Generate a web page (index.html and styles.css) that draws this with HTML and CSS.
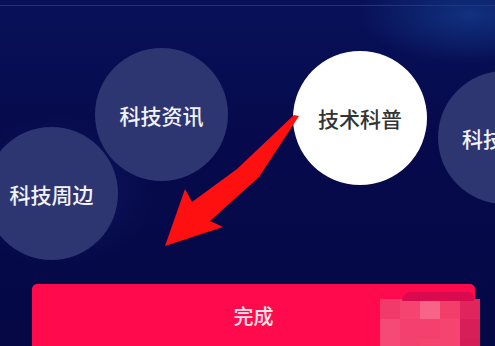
FILE: index.html
```html
<!DOCTYPE html>
<html lang="zh-CN">
<head>
    <meta charset="UTF-8">
    <title>选择兴趣</title>
    <link rel="stylesheet" href="styles.css">
</head>
<body>

<div class="screen">
    <div class="top-bar"></div>

    <div class="bubbles">
        <div class="bubble bubble-news">科技资讯</div>
        <div class="bubble bubble-gear">科技周边</div>
        <div class="bubble bubble-science selected">技术科普</div>
        <div class="bubble bubble-more">科技</div>

        <svg class="arrow" width="495" height="260" viewBox="0 0 495 260">
            <polygon fill="#ff1010"
                     points="299,117 294,116 237,170 192,203 185,190 165,247 223,228 210,222 259,178"/>
        </svg>
    </div>

    <div class="footer">
        <div class="done-button">完成</div>
    </div>

    <div class="mosaic">
        <div class="band"></div>
        <span style="background:#f23a6a"></span>
        <span style="background:#f5446f"></span>
        <span style="background:#f86488"></span>
        <span style="background:#f33d6b"></span>
        <span style="background:#e0245c"></span>
        <span style="background:#f54a75"></span>
        <span style="background:#f4406e"></span>
        <span style="background:#f3406d"></span>
        <span style="background:#f54470"></span>
        <span style="background:#d61e58"></span>
        <span style="background:#f64a74"></span>
        <span style="background:#f4426f"></span>
        <span style="background:#f5456f"></span>
        <span style="background:#f4446f"></span>
        <span style="background:#d41c56"></span>
    </div>
</div>

</body>
</html>
```

FILE: styles.css
```css
* {
    margin: 0;
    padding: 0;
    box-sizing: border-box;
}

body {
    width: 495px;
    height: 346px;
    overflow: hidden;
    font-family: "Noto Sans CJK SC", "Noto Sans", sans-serif;
}

.screen {
    position: relative;
    width: 495px;
    height: 346px;
    overflow: hidden;
    background:
        radial-gradient(ellipse 160px 70px at 470px 15px, rgba(20, 60, 140, .75), transparent 70%),
        radial-gradient(ellipse 140px 110px at 60px 190px, rgba(30, 50, 130, .35), transparent 70%),
        linear-gradient(to bottom, #081158 0, #060a4c 40%, #050845 100%);
}

.top-bar {
    height: 6px;
    border-bottom: 1px solid #24337a;
}

/* ============================================= */

.bubbles {
    position: relative;
    height: 278px;
}

.bubble {
    position: absolute;
    width: 133px;
    height: 133px;
    border-radius: 50%;
    background-color: #2e3672;
    color: #f2f3f8;
    font-size: 21px;
    font-weight: 500;
    display: flex;
    justify-content: center;
    align-items: center;
}

.bubble-news {
    left: 95px;
    top: 42px;
}

.bubble-gear {
    left: -15px;
    top: 121px;
}

.bubble-science {
    left: 293px;
    top: 45px;
    width: 134px;
    height: 134px;
}

.bubble-more {
    left: 438px;
    top: 65px;
    justify-content: flex-start;
    padding-left: 24px;
}

.selected {
    background-color: #fff;
    color: #333;
}

.arrow {
    position: absolute;
    left: 0;
    top: -7px;
}

/* ============================================= */

.footer {
    padding: 0 20px 0 32px;
}

.done-button {
    width: 443px;
    height: 70px;
    padding-bottom: 8px;
    border-radius: 5px;
    background-color: #ff0a4c;
    color: #fbe4ea;
    font-size: 20px;
    font-weight: 500;
    display: flex;
    justify-content: center;
    align-items: center;
}

.mosaic {
    position: absolute;
    left: 380px;
    top: 299px;
    width: 100px;
    display: grid;
    grid-template-columns: repeat(5, 20px);
    grid-auto-rows: 20px;
}

.mosaic .band {
    position: absolute;
    left: 22px;
    top: -7px;
    width: 72px;
    height: 9px;
    border-radius: 40px 30px 0 0;
    background-color: #d90b4e;
}
```
